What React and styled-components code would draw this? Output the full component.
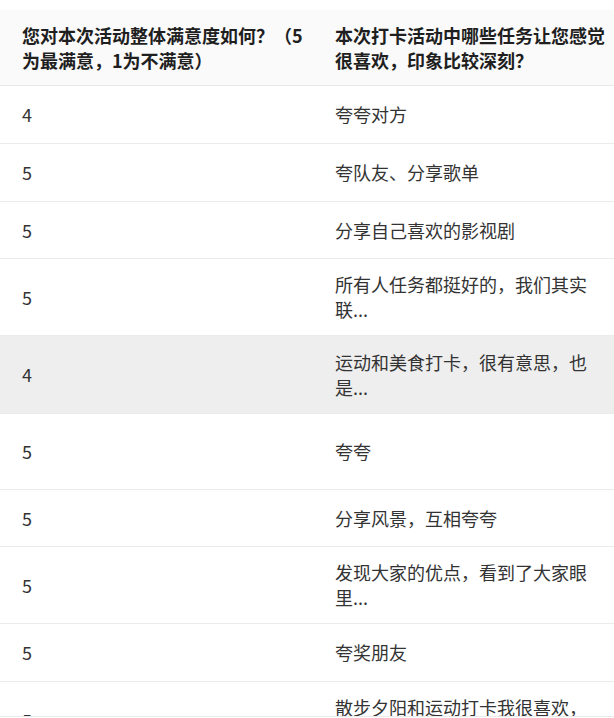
import React from 'react';
import styled, { createGlobalStyle } from 'styled-components';

const GlobalStyle = createGlobalStyle`
  html, body {
    margin: 0;
    padding: 0;
    background: #fff;
  }
  body {
    font-family: "Noto Sans CJK SC", "Noto Sans", sans-serif;
    overflow: hidden;
  }
`;

const Wrapper = styled.div`
  width: 614px;
  height: 717px;
  padding-top: 10px;
  box-sizing: border-box;
  overflow: hidden;
  border-bottom: 1px solid #ebebeb;
`;

const Table = styled.div`
  width: 900px;
`;

const Row = styled.div`
  display: flex;
  align-items: center;
  height: ${(props) => props.h}px;
  box-sizing: border-box;
  border-bottom: 1px solid #ebebeb;
  background: ${(props) => (props.active ? '#eeeeee' : 'transparent')};
`;

const HeadRow = styled(Row)`
  background: #fafafa;
  border-bottom-color: #e8e8e8;
`;

const Cell = styled.div`
  box-sizing: border-box;
  width: ${(props) => props.w}px;
  padding-left: 22px;
  font-size: 18px;
  line-height: 25px;
  color: #333;
`;

const HeadCell = styled(Cell)`
  font-weight: 700;
  color: #1f1f1f;
`;

const rows = [
  { score: 4, task: '夸夸对方', h: 58 },
  { score: 5, task: '夸队友、分享歌单', h: 58 },
  { score: 5, task: '分享自己喜欢的影视剧', h: 57 },
  { score: 5, task: '所有人任务都挺好的，我们其实联...', h: 77 },
  { score: 4, task: '运动和美食打卡，很有意思，也是...', h: 78, active: true },
  { score: 5, task: '夸夸', h: 76 },
  { score: 5, task: '分享风景，互相夸夸', h: 57 },
  { score: 5, task: '发现大家的优点，看到了大家眼里...', h: 77 },
  { score: 5, task: '夸奖朋友', h: 58 },
  { score: 5, task: '散步夕阳和运动打卡我很喜欢，也...', h: 77 },
];

const App = () => (
  <>
    <GlobalStyle />
    <Wrapper>
      <Table>
        <HeadRow h={76}>
          <HeadCell w={313}>您对本次活动整体满意度如何？（5为最满意，1为不满意）</HeadCell>
          <HeadCell w={300}>本次打卡活动中哪些任务让您感觉很喜欢，印象比较深刻？</HeadCell>
        </HeadRow>
        {rows.map((r, i) => (
          <Row key={i} h={r.h} active={r.active}>
            <Cell w={313}>{r.score}</Cell>
            <Cell w={300}>{r.task}</Cell>
          </Row>
        ))}
      </Table>
    </Wrapper>
  </>
);

export default App;
